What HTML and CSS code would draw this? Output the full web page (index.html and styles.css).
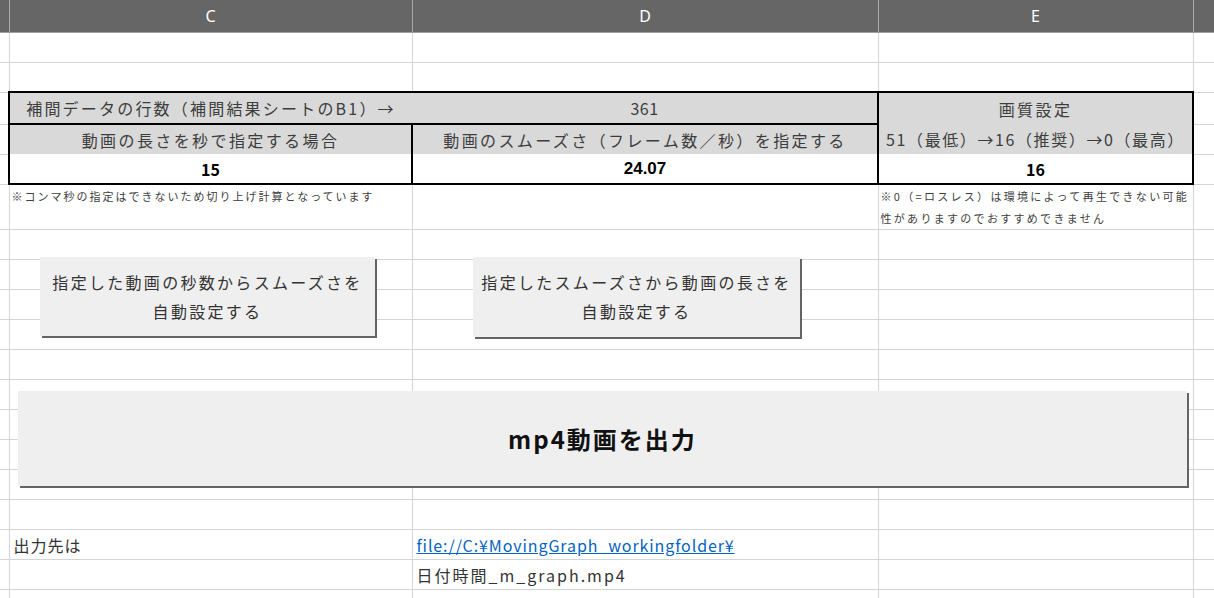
FILE: index.html
```html
<!DOCTYPE html>
<html lang="ja">
<head>
    <meta charset="UTF-8">
    <title>動画出力設定</title>
    <link rel="stylesheet" href="styles.css">
</head>
<body>
    <div class="sheet">
        <table class="grid">
            <colgroup>
                <col class="col-b">
                <col class="col-c">
                <col class="col-d">
                <col class="col-e">
                <col class="col-f">
            </colgroup>
            <thead>
                <tr class="head">
                    <th></th>
                    <th>C</th>
                    <th>D</th>
                    <th>E</th>
                    <th></th>
                </tr>
            </thead>
            <tbody>
                <tr><td></td><td></td><td></td><td></td><td></td></tr>
                <tr><td></td><td></td><td></td><td></td><td></td></tr>

                <!-- settings block -->
                <tr class="row-tall">
                    <td></td>
                    <td class="fill label c1">補間データの行数（補間結果シートのB1）→</td>
                    <td class="fill label num d1">361</td>
                    <td class="fill label e1">画質設定</td>
                    <td></td>
                </tr>
                <tr>
                    <td></td>
                    <td class="fill label c2">動画の長さを秒で指定する場合</td>
                    <td class="fill label d2">動画のスムーズさ（フレーム数／秒）を指定する</td>
                    <td class="fill label e2 tight">51（最低）→16（推奨）→0（最高）</td>
                    <td></td>
                </tr>
                <tr>
                    <td></td>
                    <td class="value c3">15</td>
                    <td class="value d3 latin">24.07</td>
                    <td class="value e3">16</td>
                    <td></td>
                </tr>
                <tr class="row-note">
                    <td></td>
                    <td class="note">※コンマ秒の指定はできないため切り上げ計算となっています</td>
                    <td></td>
                    <td class="note wrap">※0（=ロスレス）は環境によって再生できない可能<br>性がありますのでおすすめできません</td>
                    <td></td>
                </tr>

                <tr><td></td><td></td><td></td><td></td><td></td></tr>
                <tr><td></td><td></td><td></td><td></td><td></td></tr>
                <tr><td></td><td></td><td></td><td></td><td></td></tr>
                <tr><td></td><td></td><td></td><td></td><td></td></tr>
                <tr><td></td><td></td><td></td><td></td><td></td></tr>
                <tr><td></td><td></td><td></td><td></td><td></td></tr>
                <tr><td></td><td></td><td></td><td></td><td></td></tr>
                <tr><td></td><td></td><td></td><td></td><td></td></tr>
                <tr><td></td><td></td><td></td><td></td><td></td></tr>
                <tr><td></td><td></td><td></td><td></td><td></td></tr>

                <tr>
                    <td></td>
                    <td class="text">出力先は</td>
                    <td class="text"><a class="link" href="#">file://C:¥MovingGraph_workingfolder¥</a></td>
                    <td></td>
                    <td></td>
                </tr>
                <tr>
                    <td></td>
                    <td></td>
                    <td class="text wide">日付時間_m_graph.mp4</td>
                    <td></td>
                    <td></td>
                </tr>
                <tr><td></td><td></td><td></td><td></td><td></td></tr>
            </tbody>
        </table>

        <!-- form buttons sitting over the cells -->
        <button class="shape btn-sec">指定した動画の秒数からスムーズさを<br>自動設定する</button>
        <button class="shape btn-fps">指定したスムーズさから動画の長さを<br>自動設定する</button>
        <button class="shape btn-export">mp4動画を出力</button>
    </div>
</body>
</html>
```

FILE: styles.css
```css
* {
    margin: 0;
    padding: 0;
    box-sizing: border-box;
}

body {
    background: #fff;
    font-family: "Noto Sans CJK JP", "Noto Sans", sans-serif;
    color: #3b3b3b;
    overflow: hidden;
}

.sheet {
    position: relative;
    width: 1214px;
    height: 598px;
    overflow: hidden;
}

.grid {
    border-collapse: collapse;
    table-layout: fixed;
    width: 1293px;
}

.col-b { width: 9px; }
.col-c { width: 403px; }
.col-d { width: 466px; }
.col-e { width: 315px; }
.col-f { width: 100px; }

.grid td {
    border: 1px solid #d4d4d4;
    height: 30px;
    padding: 0 4px;
    white-space: nowrap;
}

.grid tr td:first-child {
    border-left: none;
}

/* column header bar */
.head th {
    height: 32px;
    background: #666;
    color: #fff;
    font-family: "Noto Sans", sans-serif;
    font-weight: 400;
    font-size: 16px;
    border-right: 1px solid #a8a8a8;
    border-bottom: 1px solid #a0a0a0;
}

.grid .row-tall td {
    height: 32px;
}

.grid .row-note td {
    height: 45px;
    vertical-align: top;
}

/* settings block */
.fill {
    background: #d9d9d9;
}

.label {
    text-align: center;
    font-size: 16px;
    letter-spacing: 2.4px;
    color: #3d3d3d;
}

.label.c1 {
    letter-spacing: 2.2px;
}

.label.num {
    letter-spacing: 0.5px;
}

.grid td.tight {
    letter-spacing: 1.6px;
    padding: 0;
}

.value {
    text-align: center;
    font-weight: 700;
    font-size: 16px;
    color: #000;
}

.latin {
    font-family: "Liberation Sans", sans-serif;
    font-size: 17px;
    padding-top: 5px;
}

/* thick frame round the block */
.grid td.c1, .grid td.c2, .grid td.c3 { border-left: 2px solid #000; }
.grid td.e1, .grid td.e2, .grid td.e3 { border-right: 2px solid #000; }
.grid td.c1, .grid td.d1, .grid td.e1 { border-top: 2px solid #000; }
.grid td.c3, .grid td.d3, .grid td.e3 { border-bottom: 2px solid #000; }

.grid td.c1 { border-right: hidden; }
.grid td.c1, .grid td.d1 { border-bottom: 2px solid #000; }
.grid td.d1, .grid td.d2, .grid td.d3 { border-right: 2px solid #000; }
.grid td.c2, .grid td.c3 { border-right: 2px solid #000; }
.grid td.e1 { border-bottom: hidden; }
.grid td.c2, .grid td.d2, .grid td.e2 { border-bottom: hidden; }

.grid td.note {
    font-size: 11px;
    letter-spacing: 2px;
    line-height: 22px;
    padding: 0 2px;
    color: #404040;
}

.grid td.wrap {
    letter-spacing: 2.3px;
}

.text {
    font-size: 16px;
    letter-spacing: 1px;
    color: #333;
}

.text.wide {
    letter-spacing: 2px;
}

.link {
    color: #0563c1;
    text-decoration: underline;
    letter-spacing: 0.9px;
}

/* buttons drawn over the sheet */
.shape {
    position: absolute;
    background: #efefef;
    border: none;
    box-shadow: 2px 2px 0 #646464;
    font-family: "Noto Sans CJK JP", sans-serif;
    color: #333;
    font-size: 16px;
    letter-spacing: 2.3px;
    line-height: 29px;
    cursor: pointer;
}

.btn-sec {
    left: 40px;
    top: 257px;
    width: 335px;
    height: 79px;
}

.btn-fps {
    left: 473px;
    top: 257px;
    width: 327px;
    height: 80px;
}

.btn-export {
    left: 18px;
    top: 391px;
    width: 1169px;
    height: 95px;
    font-size: 24px;
    font-weight: 700;
    letter-spacing: 2px;
    color: #111;
}
```
